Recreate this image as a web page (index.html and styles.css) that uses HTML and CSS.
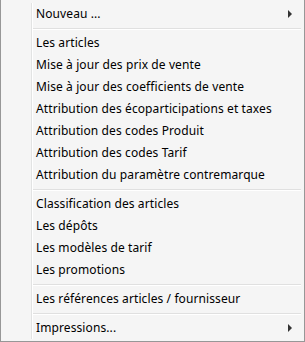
FILE: index.html
```html
<!DOCTYPE html>
<html lang="fr">
<head>
<meta charset="UTF-8">
<title>Menu articles</title>
<link rel="stylesheet" href="styles.css">
</head>
<body>

<ul class="menu">
  <li class="item sub">Nouveau ...</li>
  <li class="sep"></li>
  <li class="item">Les articles</li>
  <li class="item">Mise à jour des prix de vente</li>
  <li class="item">Mise à jour des coefficients de vente</li>
  <li class="item">Attribution des écoparticipations et taxes</li>
  <li class="item">Attribution des codes Produit</li>
  <li class="item">Attribution des codes Tarif</li>
  <li class="item">Attribution du paramètre contremarque</li>
  <li class="sep"></li>
  <li class="item">Classification des articles</li>
  <li class="item">Les dépôts</li>
  <li class="item">Les modèles de tarif</li>
  <li class="item">Les promotions</li>
  <li class="sep"></li>
  <li class="item">Les références articles / fournisseur</li>
  <li class="sep"></li>
  <li class="item sub">Impressions...</li>
</ul>

</body>
</html>
```

FILE: styles.css
```css
html, body {
  margin: 0;
  padding: 0;
}
body {
  font-family: "Noto Sans", "Open Sans", sans-serif;
  font-size: 12px;
  color: #000;
  background-color: #f5f5f5;
}
.menu {
  position: relative;
  list-style: none;
  margin: 0;
  padding: 3px 2px 2px 2px;
  width: 305px;
  height: 342px;
  box-sizing: border-box;
  background-color: #f5f5f5;
  border: 1px solid #979797;
  border-top: none;
}
/* gutter line left of the labels */
.menu::before {
  content: "";
  position: absolute;
  left: 30px;
  top: 3px;
  bottom: 2px;
  width: 1px;
  background-color: #e2e3e3;
  border-right: 1px solid #fff;
}
.item {
  position: relative;
  height: 22px;
  line-height: 22px;
  padding-left: 33px;
  letter-spacing: 0.1px;
  white-space: nowrap;
}
.sub::after {
  content: "";
  position: absolute;
  right: 10px;
  top: 7px;
  border-left: 4px solid #333;
  border-top: 4px solid transparent;
  border-bottom: 4px solid transparent;
}
.sep {
  height: 7px;
  margin-left: 29px;
  margin-right: 1px;
  box-sizing: border-box;
  padding-top: 3px;
}
.sep::before {
  content: "";
  display: block;
  height: 1px;
  background-color: #e0e0e0;
  border-bottom: 1px solid #fff;
}
```
